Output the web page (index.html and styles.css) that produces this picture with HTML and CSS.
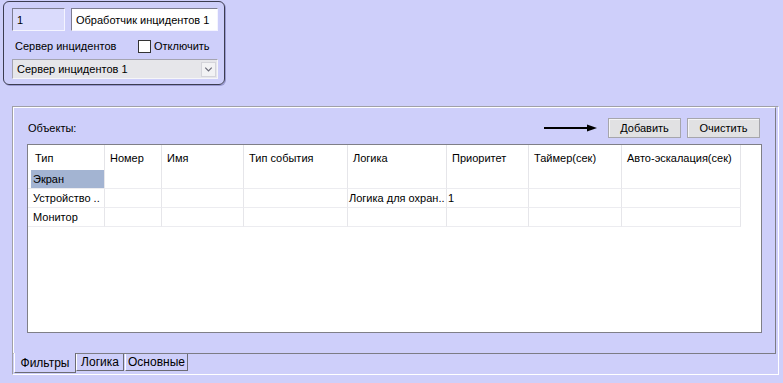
FILE: index.html
```html
<!DOCTYPE html>
<html lang="ru">
<head>
<meta charset="utf-8">
<title>Обработчик инцидентов</title>
<link rel="stylesheet" href="styles.css">
</head>
<body>
<div class="top-panel">
  <div class="row-fields">
    <div class="field id-field">1</div>
    <div class="field name-field">Обработчик инцидентов 1</div>
  </div>
  <div class="row-server">
    <span class="server-label">Сервер инцидентов</span>
    <span class="check"><span class="check-box"></span>Отключить</span>
  </div>
  <div class="select">
    <span class="select-text">Сервер инцидентов 1</span>
    <span class="select-btn"><svg width="14" height="14" viewBox="0 0 14 14"><path d="M3.5 5.5 L7 9 L10.5 5.5" fill="none" stroke="#6b6b78" stroke-width="1.3"/></svg></span>
  </div>
</div>

<div class="frame">
  <div class="page">
    <div class="toolbar">
      <span class="objects-label">Объекты:</span>
      <svg class="arrow" width="53" height="8" viewBox="0 0 53 8"><line x1="0" y1="4" x2="45" y2="4" stroke="#000" stroke-width="2"/><polygon points="43,0.5 53,4 43,7.5" fill="#000"/></svg>
      <button class="btn">Добавить</button>
      <button class="btn">Очистить</button>
    </div>
    <div class="list">
      <div class="grid">
        <div class="hcell first">Тип</div>
        <div class="hcell">Номер</div>
        <div class="hcell">Имя</div>
        <div class="hcell">Тип события</div>
        <div class="hcell">Логика</div>
        <div class="hcell">Приоритет</div>
        <div class="hcell">Таймер(сек)</div>
        <div class="hcell">Авто-эскалация(сек)</div>

        <div class="cell first"><span class="item selected">Экран</span></div>
        <div class="cell"></div>
        <div class="cell"></div>
        <div class="cell"></div>
        <div class="cell"></div>
        <div class="cell"></div>
        <div class="cell"></div>
        <div class="cell"></div>

        <div class="cell first"><span class="item">Устройство ..</span></div>
        <div class="cell"></div>
        <div class="cell"></div>
        <div class="cell"></div>
        <div class="cell">Логика для охран..</div>
        <div class="cell">1</div>
        <div class="cell"></div>
        <div class="cell"></div>

        <div class="cell first"><span class="item">Монитор</span></div>
        <div class="cell"></div>
        <div class="cell"></div>
        <div class="cell"></div>
        <div class="cell"></div>
        <div class="cell"></div>
        <div class="cell"></div>
        <div class="cell"></div>
      </div>
    </div>
  </div>
  <div class="tabs">
    <div class="tab active">Фильтры</div>
    <div class="tab tab-logic">Логика</div>
    <div class="tab tab-main">Основные</div>
  </div>
</div>
</body>
</html>
```

FILE: styles.css
```css
* { box-sizing: border-box; }

body {
  margin: 0;
  background: #cecffa;
  font-family: "Liberation Sans", Arial, sans-serif;
  font-size: 11px;
  color: #000;
  width: 783px;
  height: 383px;
  overflow: hidden;
}

/* ---------- top panel ---------- */
.top-panel {
  margin: 1px 0 0 3px;
  width: 222px;
  height: 84px;
  border: 1px solid #3c3c50;
  border-radius: 6px;
  box-shadow: 1px 1px 0 #9a9ad0;
  padding: 6px 0 0 8px;
}

.row-fields {
  display: flex;
  gap: 6px;
}

.field {
  height: 23px;
  display: flex;
  align-items: center;
  padding-left: 4px;
  border: 1px solid;
  border-color: #7c7c90 #f4f4ff #f4f4ff #7c7c90;
  white-space: nowrap;
  overflow: hidden;
}

.id-field {
  width: 53px;
  background: #dadbfc;
}

.name-field {
  width: 147px;
  background: #fff;
}

.row-server {
  display: flex;
  align-items: center;
  height: 18px;
  margin-top: 6px;
  padding-left: 3px;
}

.server-label {
  width: 123px;
}

.check {
  display: flex;
  align-items: center;
  gap: 3px;
}

.check-box {
  width: 13px;
  height: 13px;
  background: #fff;
  border: 1px solid #333;
}

.select {
  margin-top: 4px;
  width: 206px;
  height: 20px;
  display: flex;
  align-items: center;
  justify-content: space-between;
  padding: 0 1px 0 4px;
  background: #e6e6ea;
  border: 1px solid;
  border-color: #a4a4b0 #f6f6f8 #f6f6f8 #a4a4b0;
  white-space: nowrap;
}

.select-btn {
  width: 15px;
  height: 15px;
  display: flex;
  align-items: center;
  justify-content: center;
  background: #f2f2f4;
  border: 1px solid #d4d4da;
}

/* ---------- frame with tabs ---------- */
.frame {
  margin: 21px 0 0 12px;
  width: 767px;
  height: 269px;
  border: 1px solid;
  border-color: #a0a0a8 #fff #fff #a0a0a8;
}

.page {
  width: 763px;
  height: 247px;
  border: 1px solid;
  border-color: #fff #7c7c84 #7c7c84 #fff;
  padding: 10px 13px 0 13px;
}

.toolbar {
  display: flex;
  align-items: center;
  height: 20px;
}

.objects-label {
  margin-left: 1px;
  flex: 1;
}

.arrow {
  margin-right: 5px;
}

.btn {
  width: 73px;
  height: 20px;
  margin: 0 0 0 6px;
  padding: 0;
  font: inherit;
  font-size: 11px;
  color: #000;
  background: #e1e1e3;
  border: 1px solid #a6a6ac;
  box-shadow: inset 1px 1px 0 #f4f4f6;
}

.btn:last-child {
  margin-right: 2px;
}

.list {
  margin-top: 6px;
  width: 735px;
  height: 189px;
  background: #fff;
  border: 1px solid #7f7f87;
}

.grid {
  display: grid;
  grid-template-columns: 77px 57px 82px 104px 99px 82px 93px 119px;
  grid-template-rows: 25px 19px 19px 19px;
}

.hcell {
  border-right: 1px solid #e4e4e8;
  padding-left: 5px;
  display: flex;
  align-items: center;
  white-space: nowrap;
}

.hcell.first {
  padding-left: 7px;
}

.cell {
  border-right: 1px solid #e6e6ea;
  border-bottom: 1px solid #ececf0;
  padding-left: 1px;
  display: flex;
  align-items: center;
  white-space: nowrap;
  overflow: hidden;
}

.cell.first {
  padding-left: 3px;
  align-items: stretch;
}

.item {
  flex: 1;
  display: flex;
  align-items: center;
  padding-left: 2px;
}

.item.selected {
  background: #a3b4d2;
}

/* tabs at bottom */
.tabs {
  display: flex;
  align-items: flex-start;
  padding-left: 1px;
}

.tab {
  height: 17px;
  display: flex;
  align-items: center;
  justify-content: center;
  border-left: 1px solid #fff;
  border-right: 1px solid #6c6c74;
  border-bottom: 1px solid #6c6c74;
  font-size: 12px;
}

.tab.active {
  width: 62px;
  height: 20px;
  margin-top: -1px;
  background: #cecffa;
}

.tab-logic {
  width: 48px;
}

.tab-main {
  width: 63px;
  margin-left: 1px;
}
```
